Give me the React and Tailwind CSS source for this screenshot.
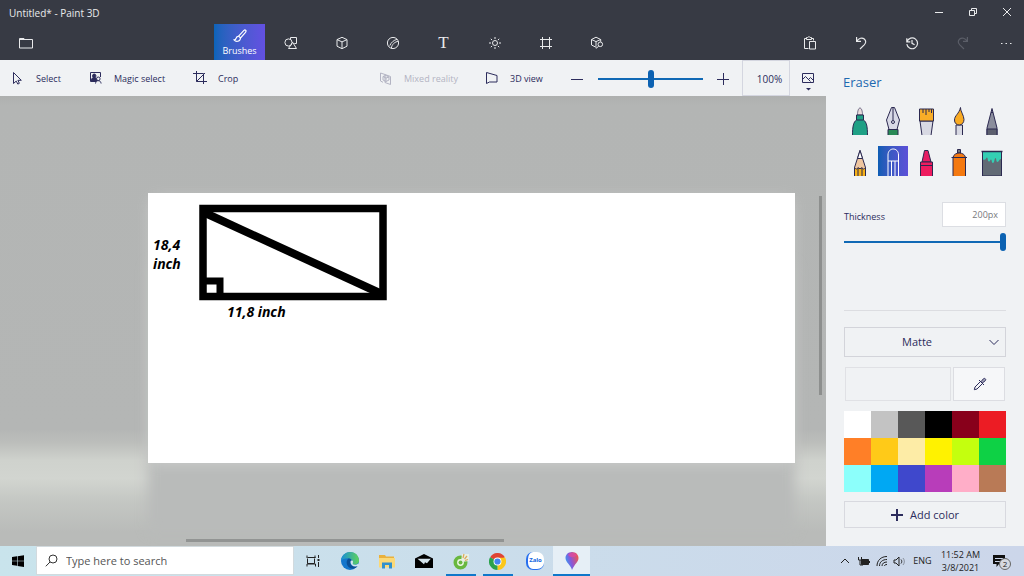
import React from "react";

const Svg = ({ size = 18, className = "", children, sw = 1 }) => (
  <svg
    width={size}
    height={size}
    viewBox={`0 0 ${size} ${size}`}
    fill="none"
    stroke="currentColor"
    strokeWidth={sw}
    className={`shrink-0 ${className}`}
    aria-hidden="true"
  >
    {children}
  </svg>
);

const icons = {
  folder: (
    <Svg size={14}>
      <path d="M.5 2.500h4.500l1 1h7.500v8.500H.5z" />
      <path d="M.5 3.500h6" />
    </Svg>
  ),
  brush: (
    <Svg size={14} sw={1.200}>
      <path d="M12.600 1.200c.7.6.4 1.500-.1 2.200L7.600 9 5.600 7.200 10.700 1.700c.6-.6 1.300-1 1.900-.5z" />
      <path d="M5.500 7.300c-1.700-.2-2.300 1-2.500 2.200-.2.900-.9 1.300-1.900 1.400 1.500 2 5.900 2.300 6.400-1.900" />
    </Svg>
  ),
  shapes2d: (
    <Svg size={14}>
      <circle cx="4.500" cy="6.500" r="3.600" />
      <path d="M6.500 3V1.500h6v6h-2.200M4.500 12.500h8L8.600 6.200z" />
    </Svg>
  ),
  cube: (
    <Svg size={14}>
      <path d="M7 1.300l5 2.300v6.600L7 12.700 2 10.200V3.600zM2 3.600l5 2.300 5-2.300M7 5.900v6.800" />
    </Svg>
  ),
  sticker: (
    <Svg size={14}>
      <path d="M12.600 7A5.600 5.600 0 1 0 7 12.600C10 12.600 12.600 10 12.600 7z" />
      <path d="M12.400 5.400C9 5.500 5.600 8.500 5.400 12.300M3.800 9.600C5 6.500 8 4 11 3.400" />
    </Svg>
  ),
  light: (
    <Svg size={14}>
      <circle cx="7" cy="7" r="2.500" />
      <path d="M7 1v2M7 11v2M1 7h2M11 7h2M2.800 2.800l1.300 1.300M9.900 9.900l1.300 1.300M2.800 11.200l1.300-1.300M9.900 4.100l1.300-1.300" />
    </Svg>
  ),
  canvas: (
    <Svg size={14}>
      <path d="M3.500 1v12M10.500 1v12M1 3.500h12M1 10.500h12" />
    </Svg>
  ),
  library: (
    <Svg size={14}>
      <path d="M6.500 11.500L1.500 9V3.500L6 1.200l4.700 2.300v2.300M1.500 3.500L6 5.600l4.700-2.100M6 5.600v5" />
      <circle cx="10.300" cy="8.300" r="2.300" />
      <path d="M8.600 10L6.200 12.600" />
    </Svg>
  ),
  paste: (
    <Svg size={14}>
      <path d="M5.500 12.500h-4v-10h2M8.500 2.500h2v2M3.500 3.500v-2h1.200c.2-1 2.300-1 2.500 0h1.300v2z" />
      <path d="M6.500 5.500h6v7.500h-6z" />
    </Svg>
  ),
  undo: (
    <Svg size={14} sw={1.200}>
      <path d="M2.600 1v4.400H7M2.700 5.300C4.700 2 8.200 1.200 10.300 3c2.200 1.900 1.600 4-.1 5.800L6 13" />
    </Svg>
  ),
  history: (
    <Svg size={14} sw={1.200}>
      <path d="M1.800 2.300v3.500h3.500M2 5.600a5.400 5.400 0 1 1-.2 2.600" />
      <path d="M7 4v3.300l2.600 1.500" />
    </Svg>
  ),
};

const tabs = [
  ["2D shapes", icons.shapes2d],
  ["3D shapes", icons.cube],
  ["Stickers", icons.sticker],
  ["Text", <span className="font-['Liberation_Serif',serif] text-[17px] leading-4">T</span>],
  ["Effects", icons.light],
  ["Canvas", icons.canvas],
  ["3D library", icons.library],
];

const headBtn = "flex h-9 w-[51px] shrink-0 items-center justify-center pt-0.5";

function Header() {
  return (
    <header className="bg-[#373a44] text-[#e9eaec]">
      <div className="flex h-6 items-center">
        <h1 className="flex-1 pl-[9px] pt-0.5 text-[10px]">Untitled* - Paint 3D</h1>
        <button aria-label="Minimize" className="flex w-[34px] justify-center">
          <Svg size={10}><path d="M1 5.500h8" /></Svg>
        </button>
        <button aria-label="Restore" className="flex w-[34px] justify-center">
          <Svg size={10}><path d="M1.500 3.500h5v5h-5zM3.500 3.500v-2h5v5h-2" /></Svg>
        </button>
        <button aria-label="Close" className="flex w-[34px] justify-center">
          <Svg size={10}><path d="M1 1l8 8M9 1L1 9" /></Svg>
        </button>
      </div>
      <nav className="flex h-9">
        <button aria-label="Menu" className={headBtn}>{icons.folder}</button>
        <div className="flex-[163_1_0]" />
        <button className="flex h-9 w-[51px] shrink-0 flex-col items-center bg-gradient-to-r from-[#0a64b8] to-[#6350e2] pt-[5px] text-[9px] leading-[15px] text-white">
          {icons.brush}
          Brushes
        </button>
        {tabs.map(([name, icon]) => (
          <button key={name} aria-label={name} className={headBtn}>{icon}</button>
        ))}
        <div className="flex-[162_1_0]" />
        <button aria-label="Paste" className={headBtn}>{icons.paste}</button>
        <button aria-label="Undo" className={headBtn}>{icons.undo}</button>
        <button aria-label="History" className={headBtn}>{icons.history}</button>
        <button aria-label="Redo" disabled className={`${headBtn} text-[#5b5e68]`}>
          <span className="-scale-x-100">{icons.undo}</span>
        </button>
        <button aria-label="More" className="flex w-9 items-center justify-center pt-0.5">
          <Svg size={12}><path d="M1 6.500h1.500M5.500 6.500H7M10 6.500h1.500" /></Svg>
        </button>
      </nav>
    </header>
  );
}

const toolBtn = "flex shrink-0 items-center gap-[10px] whitespace-nowrap pl-2 pt-0.5";
const slider =
  "appearance-none bg-transparent [&::-webkit-slider-runnable-track]:h-[2px] [&::-webkit-slider-runnable-track]:bg-[#1069b5] [&::-webkit-slider-thumb]:-mt-2 [&::-webkit-slider-thumb]:h-[18px] [&::-webkit-slider-thumb]:w-[6px] [&::-webkit-slider-thumb]:appearance-none [&::-webkit-slider-thumb]:rounded-[3px] [&::-webkit-slider-thumb]:bg-[#0c62b2]";

function Toolbar() {
  return (
    <div className="flex h-9 bg-[#f0f2f4] text-[9px] text-[#2c2c5c]">
      <button className={`${toolBtn} w-[78px]`}>
        <Svg><path d="M5.500 2.500v11l2.700-2.400 1.600 3 1.600-.8-1.500-3h3.400z" /></Svg>
        Select
      </button>
      <button className={`${toolBtn} w-[104px]`}>
        <Svg>
          <path d="M10 11.500H4.500v-9h10V7" />
          <path d="M5 11c0-2 1-3 2.500-3.300-1.500-1-1.300-3.700.7-3.700s2.200 2.600.8 3.700c1 .2 1.500.8 1.500 1.500V11z" fill="currentColor" />
          <circle cx="12.300" cy="8.800" r="1.800" fill="#f0f2f4" />
          <path d="M9.500 13.500c.3-2 1.300-2.800 2.800-2.800s2.500.8 2.800 2.800" />
        </Svg>
        Magic select
      </button>
      <button className={`${toolBtn} w-[70px]`}>
        <Svg><path d="M6.500 1v10.500H17M3 3.500h10.500V14M6.500 11.500L15 3" /></Svg>
        Crop
      </button>
      <div className="flex-1" />
      <button disabled className={`${toolBtn} w-[106px] text-[#b3b4c3]`}>
        <Svg>
          <path d="M9 4.500L4.500 3v8L7 12.300M9 4.500l5.500 2v8L9 12.500z" />
          <path d="M7 6.500l3-1L13 7v3l-3 1.500L7 10zM7 6.500L10 8l3-1M10 8v3.500" />
        </Svg>
        Mixed reality
      </button>
      <button className={`${toolBtn} w-[84px]`}>
        <Svg><path d="M4.500 2.500L15 5.500v6.500H7.500l-3 1.500z" /></Svg>
        3D view
      </button>
      <button aria-label="Zoom out" className="flex w-[38px] shrink-0 items-center justify-center pt-px">
        <Svg size={12}><path d="M0 6.500h12" /></Svg>
      </button>
      <input aria-label="Zoom" type="range" min="0" max="100" defaultValue="50" className={`w-[107px] shrink-0 pl-[2px] pt-px ${slider}`} />
      <button aria-label="Zoom in" className="flex w-[39px] shrink-0 items-center justify-center pt-0.5">
        <Svg size={12}><path d="M0 6.500h12M6.500 0v12" /></Svg>
      </button>
      <div className="flex w-12 shrink-0 items-center justify-center border border-[#d4d6e0] pl-[7px] pt-0.5 text-[10px]">100%</div>
      <button aria-label="View options" className="flex w-9 shrink-0 flex-col items-center pt-[10px]">
        <Svg size={16}>
          <path d="M2.500 3.500h11v9h-11zM2.500 9.500l3-3 5 5M8.500 9.500l2-2 3 3" />
        </Svg>
        <Svg size={5}><path d="M0 2h5L2.500 4.500z" fill="currentColor" stroke="none" /></Svg>
      </button>
    </div>
  );
}

function Stage() {
  return (
    <main className="relative flex min-h-0 flex-1 overflow-hidden bg-[linear-gradient(to_bottom,#aeb0af_0%,#b3b5b4_2%,#b4b6b5_74%,#bcbebb_77%,#cfd2cd_81%,#d2d5d0_85%,#c4c7c3_90%,#b9bbb9_97%)] pb-[83px] pl-[148px] pr-[31px] pt-[97px]">
      <div className="relative flex-1 bg-white shadow-[0_3px_14px_-4px_#d0d1d0,0_70px_12px_#b9bbba]">
        <svg width="188" height="97" viewBox="0 0 188 97" className="absolute left-[51px] top-[11px]" fill="none" stroke="#000" aria-hidden="true">
          <path d="M4 4.500h180v88H4z" strokeWidth="7.500" />
          <path d="M4 8l181 83" strokeWidth="8" />
          <path d="M7 77h14v17" strokeWidth="7" />
        </svg>
        <p className="absolute left-[5px] top-[42px] text-[14px] font-bold italic leading-[19px] text-black">
          18,4<br />inch
        </p>
        <p className="absolute left-[79px] top-[109px] text-[14px] font-bold italic leading-[19px] text-black">11,8 inch</p>
      </div>
      <div className="absolute right-1 top-[100px] h-[199px] w-[3px] bg-[#8d8f8e]" />
      <div className="absolute bottom-1 left-[186px] h-[3px] w-[318px] bg-[#929493]" />
    </main>
  );
}

const O = "#2b2950";
const brushes = [
  ["Marker", (
    <>
      <path d="M12.500 10c0-4 1-7 2.500-7s2.500 3 2.500 7z" fill="#e8dcdc" strokeWidth=".6" />
      <path d="M11.500 10h7v5c3 2 4 6 4 15.500h-15c0-9.500 1-13.500 4-15.500z" fill="#1fa085" />
      <path d="M11.500 15h7" />
    </>
  )],
  ["Calligraphy pen", (
    <>
      <path d="M10 24.500h10v6H10z" fill="#2a8a56" />
      <path d="M13.500 2.500h3L21.500 15 19 24.500h-8L8.500 15z" fill="#d8d9e6" />
      <path d="M15 3v12" />
      <circle cx="15" cy="17" r="1.500" />
    </>
  )],
  ["Oil brush", (
    <>
      <path d="M9 16l2 14.500h9L22 16z" fill="#d8d9e3" />
      <path d="M8.500 4H22.500v12h-14z" fill="#f9ad27" />
      <path d="M12 4v4M15 4v6M18 4v3M20.500 4v4" />
    </>
  )],
  ["Watercolor", (
    <>
      <path d="M12 20h6.500v10.500H12z" fill="#d8d9e3" />
      <path d="M16.500 2.500c-.5 3 3.500 8 3.500 12 0 3-2 5.500-4.800 5.500S10.500 18 10.500 15c0-4.500 4.500-6 6-12.500z" fill="#f9ab23" />
    </>
  )],
  ["Pixel pen", (
    <>
      <path d="M15 3.500L20 23v7.500H10V23z" fill="#8b8e9d" />
      <path d="M10 24h10v6.500H10z" fill="#5d606f" />
      <path d="M14 7.500h2" />
    </>
  )],
  ["Pencil", (
    <>
      <path d="M15 4.500l5.500 17v9h-11v-9z" fill="#efc6a0" />
      <path d="M15 4.500l2.500 8h-5z" fill="#fff" />
      <path d="M9.500 21.500c2 2 2.500 2 3.500 0 1 1.500 3 1.500 4 0 1 2 1.500 2 3.500 0v9h-11z" fill="#f6b118" />
      <path d="M13 22v8M17 22v8" />
    </>
  )],
  ["Eraser", (
    <g stroke="#fff">
      <path d="M10 15V9c0-8 10.500-8 10.500 0v6z" />
      <path d="M10 15v15M13.500 15v15M17 15v15M20.500 15v15" />
    </g>
  )],
  ["Crayon", (
    <>
      <path d="M13.500 4.500h3.500L20 16h-9z" fill="#e61e64" />
      <path d="M9.500 16h12v14.500h-12zM9.500 19.500h12" fill="#ee1c5f" />
    </>
  )],
  ["Spray can", (
    <>
      <path d="M13.500 3.500h3V7h-3z" fill="#777" />
      <path d="M9 11.500c1-6 11.500-6 12.500 0v19H9z" fill="#f47910" />
      <path d="M7.500 11.500H23" />
    </>
  )],
  ["Fill", (
    <>
      <path d="M5.500 6h19v24h-19z" fill="#626b75" />
      <path d="M6 6h18v7c-2 0-2 3-3.500 3s-1-4-2-4-1 5-2.500 5-1-3.500-2-3.500-.5 2-2 2-1-4-2-4-1 2-2 2-2 1-2-1z" fill="#34cfb4" stroke="none" />
      <path d="M4.500 5.500h21" strokeWidth="1.500" />
    </>
  )],
];

const swatches = [
  ["White", "bg-[#ffffff]"], ["Light gray", "bg-[#c3c3c3]"], ["Gray", "bg-[#585858]"], ["Black", "bg-[#000000]"], ["Dark red", "bg-[#88001b]"], ["Red", "bg-[#ec1c24]"],
  ["Orange", "bg-[#ff7f27]"], ["Gold", "bg-[#ffca18]"], ["Cream", "bg-[#fdeca6]"], ["Yellow", "bg-[#fff200]"], ["Lime", "bg-[#c4ff0e]"], ["Green", "bg-[#0ed145]"],
  ["Turquoise", "bg-[#8cfffb]"], ["Blue", "bg-[#00a8f3]"], ["Indigo", "bg-[#3f48cc]"], ["Purple", "bg-[#b83dba]"], ["Rose", "bg-[#ffaec8]"], ["Brown", "bg-[#b97a56]"],
];

function Panel() {
  return (
    <aside className="flex w-[198px] shrink-0 flex-col bg-[#f0f2f4] px-[18px] text-[#2c2c5c]">
      <h2 className="-ml-px mt-3 h-5 text-[13px] leading-5 text-[#1d69b0]">Eraser</h2>
      <div className="-mr-px ml-px mt-[13px] grid grid-cols-[repeat(5,30px)] justify-between gap-y-[11px]">
        {brushes.map(([name, art]) => (
          <button
            key={name}
            aria-label={name}
            className={`h-[30px] w-[30px] ${name === "Eraser" ? "bg-gradient-to-r from-[#0a5db4] to-[#5c50d8]" : ""}`}
          >
            <svg viewBox="0 0 30 30" className="h-[30px] w-[30px]" fill="none" stroke={O} strokeWidth="1" aria-hidden="true">{art}</svg>
          </button>
        ))}
      </div>
      <div className="mt-[26px] flex items-center justify-between">
        <label htmlFor="thickness" className="pt-1 text-[9px]">Thickness</label>
        <input id="thickness" defaultValue="200px" className="h-[25px] w-16 border border-[#dcdee3] bg-white pr-[7px] text-right text-[9px] text-[#77787c]" />
      </div>
      <input aria-label="Thickness slider" type="range" min="1" max="200" defaultValue="200" className={`mt-[5px] h-[19px] w-full ${slider}`} />
      <hr className="mt-[59px] border-[#dcdde1]" />
      <div className="relative mt-4">
        <select aria-label="Material" className="h-[30px] w-full appearance-none border border-[#d3d4da] bg-transparent pr-4 pt-px text-center text-[11px] [text-align-last:center]">
          <option>Matte</option>
        </select>
        <Svg size={10} className="pointer-events-none absolute right-[7px] top-[10px]"><path d="M.5 3l4.500 4.500L9.500 3" /></Svg>
      </div>
      <div className="mt-[10px] flex gap-[2px] px-px">
        <div className="h-[34px] flex-1 border border-[#e0e1e5]" />
        <button aria-label="Eyedropper" className="flex h-[34px] w-[52px] items-center justify-center border border-[#dcdde2] bg-[#f6f7f9] pl-0.5">
          <Svg size={14}>
            <path d="M7.500 4.500L2 10l-.7 2.700L4 12l5.500-5.500" />
            <path d="M6 3l5 5M8 4.700l2.300-2.800c1.400-1.400 3.300.5 1.900 1.900L9.300 6z" fill="currentColor" fillOpacity=".4" />
          </Svg>
        </button>
      </div>
      <div className="mt-[10px] grid grid-cols-6">
        {swatches.map(([name, bg]) => (
          <button key={name} aria-label={name} className={`h-[27px] ${bg}`} />
        ))}
      </div>
      <button className="mt-[9px] flex h-[27px] items-center justify-center gap-[7px] border border-[#d8d9df] text-[11px]">
        <Svg size={12} sw={2}><path d="M0 6h12M6 0v12" /></Svg>
        <span className="pt-px">Add color</span>
      </button>
    </aside>
  );
}

const taskBtn = "flex h-full w-[37px] shrink-0 items-center justify-center";

function Taskbar() {
  return (
    <footer className="flex h-[30px] items-stretch bg-gradient-to-r from-[#c9e4ec] to-[#ccd6ea] text-[#222]">
      <button aria-label="Start" className="flex w-9 items-center justify-center">
        <Svg size={12}>
          <path d="M0 2l5-.7v4.400H0zM5.600 1.200L12 .2v5.500H5.600zM0 6.300h5v4.500L0 10zM5.600 6.300H12V12l-6.400-1z" fill="#000" stroke="none" />
        </Svg>
      </button>
      <label className="mb-px flex w-[258px] items-center gap-2 border border-[#d2dade] bg-white pl-2">
        <Svg size={13} className="text-[#333]"><circle cx="8" cy="5" r="4" /><path d="M5 8L.8 12.300" /></Svg>
        <input aria-label="Search" placeholder="Type here to search" className="w-full bg-transparent pt-0.5 text-[11px] outline-none placeholder:text-[#555]" />
      </label>
      <button aria-label="Task view" className="flex w-[37px] items-center justify-center">
        <Svg size={14} className="text-[#222]"><path d="M1 1.500V4M9 1.500V4M1.500 3.500h8M1.500 4.500v5h7v-5M1 12.500V10h8.500v2.500M12.500 1v3M12.500 8v5" /><path d="M11.500 5h2v2h-2z" fill="#222" stroke="none" /></Svg>
      </button>
      <button aria-label="Edge" className={taskBtn}>
        <svg width="18" height="18" viewBox="0 0 18 18" aria-hidden="true">
          <defs>
            <linearGradient id="edgeTop" x1="0" x2="1"><stop offset="0" stopColor="#1a8ed6" /><stop offset="1" stopColor="#5fd35a" /></linearGradient>
          </defs>
          <circle cx="9" cy="9" r="9" fill="#1476cc" />
          <path d="M.1 8.500C1-2.500 17.500-3 18 8.500c0 3-2.500 4.300-5 4.300-2 0-3-.8-2-2 1-1.800-.5-4.300-3.500-4.500C4 6.200 1 7.500.1 8.500z" fill="url(#edgeTop)" />
          <path d="M7.500 6.500c-3 2-2.500 8 2.500 10 3 .5 5.500-.5 7-3-3 1.500-6.500.8-7.500-1.500-.8-2 .5-3 1.500-2.500-.3-2-1.500-3-3.500-3z" fill="#0b4f96" />
          <path d="M9.500 10c0-2 3-2 2.500.3-.8 1.700 0 2.500 1.700 2.500 1.500 0 2.800-.4 3.800-1.300L18 14l-3.500.5C11.500 14.500 9.500 12.500 9.500 10z" fill="#d3e5ee" />
        </svg>
      </button>
      <button aria-label="File Explorer" className={taskBtn}>
        <svg width="16" height="15" viewBox="0 0 16 15" aria-hidden="true">
          <path d="M0 1h6l1 1.500h8V13H0z" fill="#eab13c" />
          <path d="M0 4h16v9.500H0z" fill="#fbd978" />
          <path d="M3 14.500V8.500h10v6h-3V11H6v3.500z" fill="#3090cf" />
        </svg>
      </button>
      <button aria-label="Mail" className={taskBtn}>
        <svg width="18" height="14" viewBox="0 0 18 14" aria-hidden="true">
          <path d="M0 4.500L9 0l9 4.500V14H0z" fill="#000" />
          <path d="M2.500 4.800h13.300L12 9.300l-2-1-1 2z" fill="#d4e3ec" />
        </svg>
      </button>
      <button aria-label="Coc Coc" className={`${taskBtn} relative`}>
        <svg width="16" height="17" viewBox="0 0 16 17" aria-hidden="true">
          <circle cx="7.500" cy="9.500" r="5.200" fill="#eef6e6" stroke="#69b83f" strokeWidth="3.600" />
          <path d="M8 9L9 1l7 0v7z" fill="#e6efe4" />
          <path d="M10 5l1-4M11.500 6L14 3M12 7.500l3-1" stroke="#dca85a" strokeWidth="1.200" />
          <circle cx="7.500" cy="9.500" r="2" fill="#69b83f" />
        </svg>
        <span className="absolute bottom-0 h-[2px] w-[30px] bg-[#0f78ca]" />
      </button>
      <button aria-label="Chrome" className={`${taskBtn} relative`}>
        <svg width="17" height="17" viewBox="0 0 18 18" aria-hidden="true">
          <path d="M9 9L1.200 4.500A9 9 0 0 1 16.800 4.500z" fill="#e04434" />
          <path d="M9 9l7.800-4.500A9 9 0 0 1 9 18z" fill="#fbc71a" />
          <path d="M9 9v9A9 9 0 0 1 1.200 4.500z" fill="#2aa24c" />
          <path d="M9 5h7.900l-3.400 6.500-4 6.500z" fill="#fbc71a" />
          <circle cx="9" cy="9" r="4.200" fill="#fff" />
          <circle cx="9" cy="9" r="3.300" fill="#4285f0" />
        </svg>
        <span className="absolute bottom-0 h-[2px] w-[30px] bg-[#0f78ca]" />
      </button>
      <button aria-label="Zalo" className={taskBtn}>
        <span className="flex h-[18px] w-[18px] items-center justify-center rounded-[7px] border-b border-l-2 border-[#2870ee] bg-white text-[6px] font-bold text-[#1464e0]">Zalo</span>
      </button>
      <button aria-label="Paint 3D" className={`${taskBtn} relative bg-[#e6eff6]`}>
        <svg width="14" height="18" viewBox="0 0 14 18" aria-hidden="true">
          <defs>
            <linearGradient id="dropFill" x1="0" y1=".7" x2="1" y2=".3">
              <stop offset="0" stopColor="#2aa5f4" /><stop offset=".45" stopColor="#8a55d8" /><stop offset="1" stopColor="#f0564c" />
            </linearGradient>
          </defs>
          <path d="M7 0c4 0 6.500 2.800 6.500 6 0 4-4 6-6.500 12C6 13 .5 10.500.5 6 .5 2.800 3 0 7 0z" fill="url(#dropFill)" />
          <path d="M3 3c2-3 7-3 9 0-3 3-6 3-9 0z" fill="#e6489c" opacity=".7" />
        </svg>
        <span className="absolute bottom-0 h-[2px] w-full bg-[#0f78ca]" />
      </button>
      <div className="flex-1" />
      <div className="flex items-center">
        <button aria-label="Hidden icons" className="flex w-[18px] justify-center"><Svg size={10}><path d="M1 7l4-4 4 4" /></Svg></button>
        <span className="flex w-[18px] justify-center">
          <Svg size={13}><path d="M4.500 4.500h7v5h-7z" fill="currentColor" /><path d="M12.500 6v2M1.500 2v3h3V2M3 5v5h3" /></Svg>
        </span>
        <span className="flex w-[19px] justify-center">
          <Svg size={12}><path d="M1 11C1 5.500 5 1.500 11 1.500M3.500 11C3.500 7 6.500 4.500 11 4.500M6 11c0-2.500 2-4 5-4M8.500 11c0-1 1-1.500 2.500-1.500" /></Svg>
        </span>
        <span className="flex w-4 justify-center">
          <Svg size={13}><path d="M1 5h2l3-3v9L3 8H1zM8 4.500c1 1 1 3 0 4" /><path d="M10 3c1.800 2 1.800 5 0 7" opacity=".4" /></Svg>
        </span>
        <span className="w-[31px] text-center text-[9px]">ENG</span>
        <div className="w-[45px] text-center text-[9px] leading-[13px] whitespace-nowrap">
          11:52 AM<br />3/8/2021
        </div>
        <button aria-label="Notifications" className="relative ml-1.5 flex w-[35px] justify-start pl-[3px]">
          <Svg size={14}><path d="M1 1h12v9H7l-2.500 3v-3H1z" fill="#111" stroke="none" /><path d="M3 4.500h8M3 7.500h6" stroke="#ccd6ea" /></Svg>
          <span className="absolute left-[10px] top-1 flex h-[12px] w-[12px] items-center justify-center rounded-full border border-[#666] bg-[#d5d9e0] text-[8px]">2</span>
        </button>
      </div>
    </footer>
  );
}

export default function App() {
  return (
    <div className="flex min-h-screen flex-col font-['Open_Sans','Noto_Sans',sans-serif]">
      <Header />
      <div className="flex flex-1">
        <div className="flex min-w-0 flex-1 flex-col">
          <Toolbar />
          <Stage />
        </div>
        <Panel />
      </div>
      <Taskbar />
    </div>
  );
}
